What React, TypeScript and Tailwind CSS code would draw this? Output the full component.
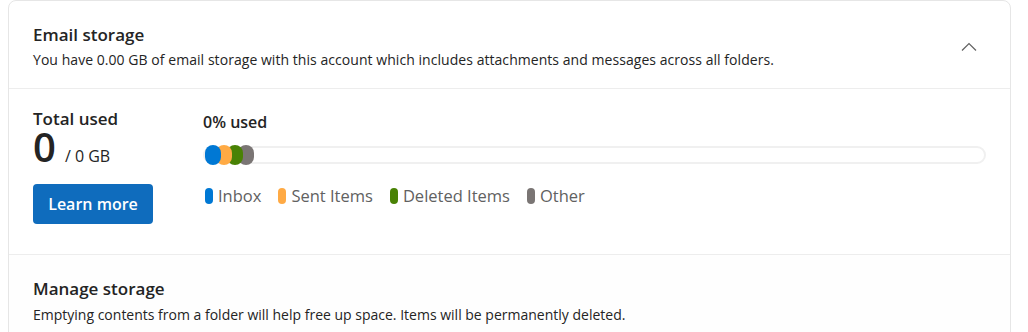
import React from 'react';

const font = { fontFamily: '"Segoe UI", "Open Sans", "Noto Sans", sans-serif' };

const legend = [
  { label: 'Inbox', color: 'bg-[#0078d4]' },
  { label: 'Sent Items', color: 'bg-[#ffaa44]' },
  { label: 'Deleted Items', color: 'bg-[#498205]' },
  { label: 'Other', color: 'bg-[#7a7574]' },
];

export default function App() {
  return (
    <div className="w-[1028px] h-[332px] bg-white overflow-hidden" style={font}>
      <div className="ml-2 mr-[17px] border border-[#e6e6e6] rounded-lg">
        {/* Header */}
        <div className="flex items-center pl-6 pr-8 pt-[22px] pb-[18px] border-b border-[#ededed]">
          <div className="flex-1">
            <div className="text-[17px] font-semibold text-[#242424] leading-6">Email storage</div>
            <div className="text-[14px] text-[#242424] leading-5 mt-[3px] tracking-[0.05px]">
              You have 0.00 GB of email storage with this account which includes attachments and messages across all folders.
            </div>
          </div>
          <svg width="18" height="18" viewBox="0 0 18 18" className="text-[#616161]">
            <path d="M2 12.5 L9 5.5 L16 12.5" fill="none" stroke="currentColor" strokeWidth="1.2" />
          </svg>
        </div>

        {/* Usage */}
        <div className="flex pl-6 pr-6 pt-[19px] pb-[30px] border-b border-[#ededed]">
          <div className="w-[170px]">
            <div className="text-[17px] font-semibold text-[#242424] leading-[22px]">Total used</div>
            <div className="flex items-baseline">
              <span className="text-[40px] font-semibold text-[#242424] leading-[34px]">0</span>
              <span className="text-[16px] text-[#242424] ml-[9px]">/ 0 GB</span>
            </div>
            <button className="mt-4 w-[120px] h-10 rounded bg-[#0f6cbd] text-white text-[16px] font-semibold">
              Learn more
            </button>
          </div>
          <div className="flex-1 pt-[3px]">
            <div className="text-[16px] font-semibold text-[#242424] leading-[22px]">0% used</div>
            <div className="relative mt-[12px] h-5">
              <div className="absolute left-0 right-0 top-px h-[18px] rounded-full border-2 border-[#f0f0f0]"></div>
              <div className="relative flex h-5 pl-[2px]">
                <div className="w-4 h-5 shrink-0 rounded-full bg-[#0078d4] z-40"></div>
                <div className="w-4 h-5 shrink-0 rounded-full bg-[#ffaa44] -ml-[5px] z-30"></div>
                <div className="w-4 h-5 shrink-0 rounded-full bg-[#498205] -ml-[5px] z-20"></div>
                <div className="w-4 h-5 shrink-0 rounded-full bg-[#7a7574] -ml-[5px] z-10"></div>
              </div>
            </div>
            <div className="flex items-center gap-[17px] mt-[21px] pl-[2px]">
              {legend.map(item => (
                <div key={item.label} className="flex items-center gap-[5px]">
                  <span className={'w-2 h-4 rounded-full ' + item.color}></span>
                  <span className="text-[16.5px] text-[#616161] leading-5">{item.label}</span>
                </div>
              ))}
            </div>
          </div>
        </div>

        {/* Manage storage */}
        <div className="pl-6 pt-[22px] pb-6 bg-[#fefefe]">
          <div className="text-[17px] font-semibold text-[#242424] leading-6">Manage storage</div>
          <div className="text-[14px] text-[#242424] leading-5 mt-1">
            Emptying contents from a folder will help free up space. Items will be permanently deleted.
          </div>
        </div>
      </div>
    </div>
  );
}
